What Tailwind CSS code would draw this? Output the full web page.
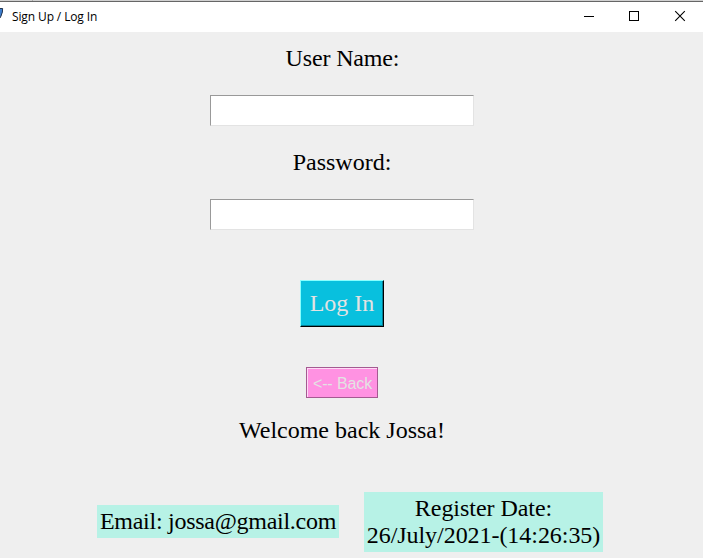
<!DOCTYPE html>
<html lang="en">
<head>
<meta charset="utf-8">
<title>Sign Up / Log In</title>
<script src="https://cdn.jsdelivr.net/npm/@tailwindcss/browser@4"></script>
</head>
<body class="h-[558px] w-[703px] overflow-hidden bg-[#efefef] text-black">
<header class="flex h-8 w-full flex-col bg-white">
  <div class="flex h-px w-full shrink-0 bg-[#d0d0d0]"><span class="ml-8 w-px bg-[#aaaaaa]"></span></div>
  <div class="h-px w-full shrink-0 bg-[#666666]"></div>
  <div class="flex h-[30px] items-center">
    <svg class="h-[30px] w-3 shrink-0" viewBox="0 2 12 30"><path d="M0 8.5L2.7 8.3L2.5 12L1.2 16L0 17.5Z" fill="#3d7fd0"/><path d="M0 8.5H2.6L2.4 12L1 16L0 18" fill="none" stroke="#26364f" stroke-width="1"/></svg>
    <h1 class="w-[571px] whitespace-nowrap font-['Open_Sans',sans-serif] text-[12px] leading-[30px] tracking-[-0.12px]">Sign Up / Log In</h1>
    <svg class="h-[30px] w-[120px] shrink-0" viewBox="583 2 120 30" fill="none" stroke="#000"><path d="M584 16.5H594M629.5 11.5H638.5V20.5H629.5Z" shape-rendering="crispEdges"/><path d="M675.2 11.2L684.8 20.8M684.8 11.2L675.2 20.8" stroke-width="1.1"/></svg>
  </div>
</header>
<main class="flex w-[684px] flex-col items-center font-['Liberation_Serif',serif] text-[24px] leading-[27px]">
  <label for="user" class="mt-[13px] ml-px tracking-[-0.15px]">User Name:</label>
  <input id="user" class="mt-[23px] h-[31px] w-[264px] border border-t-[#999999] border-r-[#e3e3e3] border-b-[#e3e3e3] border-l-[#999999] bg-white px-1 outline-none">
  <label for="pass" class="mt-[23px]">Password:</label>
  <input id="pass" type="password" class="mt-[23px] h-[31px] w-[264px] border border-t-[#999999] border-r-[#e3e3e3] border-b-[#e3e3e3] border-l-[#999999] bg-white px-1 outline-none">
  <button class="mt-[50px] h-[47px] w-[84px] border border-t-[#88ffff] border-r-black border-b-black border-l-[#88ffff] bg-[#08c0de] text-[#e3e3e3] shadow-[inset_-1px_-1px_#058096]">Log In</button>
  <button class="mt-10 h-[31px] w-[72px] border border-[#a45a91] bg-[#ff92e2] pt-0.5 pl-px font-['Liberation_Sans',sans-serif] text-[16px] leading-[27px] tracking-[-0.1px] whitespace-nowrap text-[#e3e3e3] shadow-[inset_1px_1px_#ffd9f6]">&lt;-- Back</button>
  <p class="mt-[19px]">Welcome back Jossa!</p>
</main>
<footer class="mt-[48px] ml-[97px] flex items-start gap-[25px] text-center font-['Liberation_Serif',serif] text-[24px] leading-[27px]">
  <p class="mt-[13px] h-[33px] w-[242px] bg-[#b7f2e6] pt-[3px] tracking-[-0.27px] whitespace-nowrap">Email: jossa@gmail.com</p>
  <p class="h-[60px] w-[239px] bg-[#b7f2e6] pt-[3px] tracking-[-0.05px] whitespace-nowrap">Register Date:<br>26/July/2021-(14:26:35)</p>
</footer>
</body>
</html>
